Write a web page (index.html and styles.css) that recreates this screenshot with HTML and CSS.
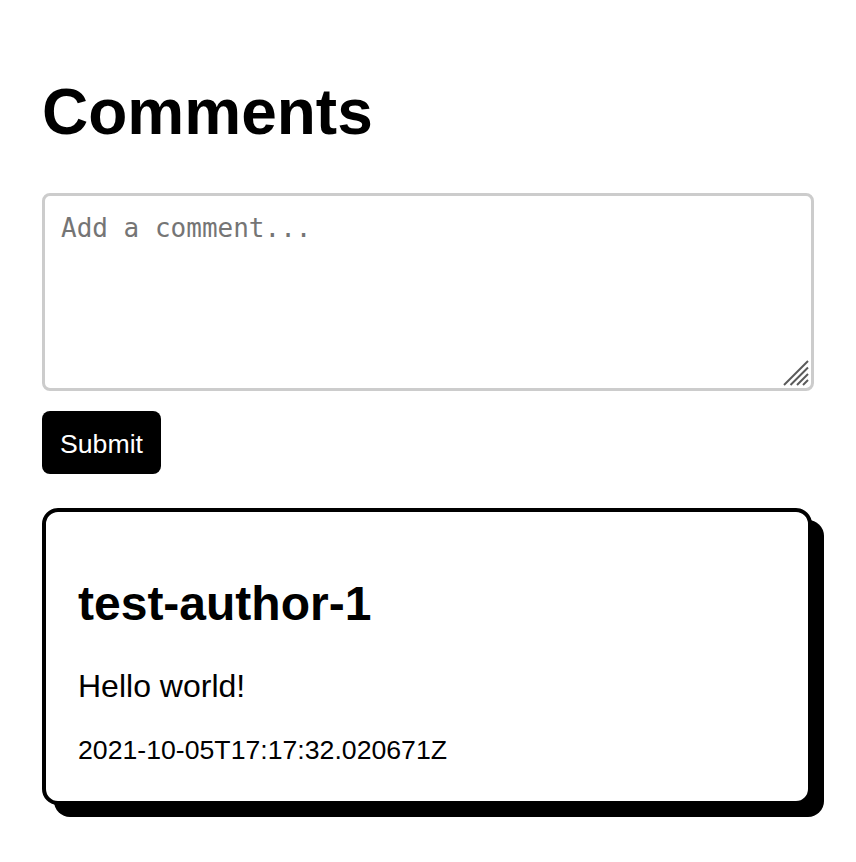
FILE: index.html
```html
<!DOCTYPE html>
<html lang="en">
<head>
<meta charset="utf-8">
<title>Comments</title>
<link rel="stylesheet" href="styles.css">
</head>
<body>
<main class="page">
  <h1 class="title">Comments</h1>
  <form class="comment-form">
    <div class="composer">
      <textarea class="composer-input" placeholder="Add a comment..."></textarea>
      <svg class="resize-grip" width="26" height="26" viewBox="0 0 26 26" aria-hidden="true">
        <g stroke="#5a5a5a" stroke-width="2" stroke-linecap="butt">
          <line x1="1" y1="25" x2="25" y2="1"/>
          <line x1="7.5" y1="25" x2="25" y2="7.5"/>
          <line x1="14" y1="25" x2="25" y2="14"/>
          <line x1="20" y1="25" x2="25" y2="20"/>
        </g>
      </svg>
    </div>
    <button type="button" class="submit-btn">Submit</button>
  </form>
  <article class="comment-card">
    <h2 class="comment-author">test-author-1</h2>
    <p class="comment-body">Hello world!</p>
    <p class="comment-date">2021-10-05T17:17:32.020671Z</p>
  </article>
</main>
</body>
</html>
```
FILE: styles.css
```css
html, body {
  margin: 0;
  padding: 0;
  background: #ffffff;
}

body {
  font-family: "Liberation Sans", Arial, Helvetica, sans-serif;
  color: #000000;
}

.page {
  padding: 75px 42px 40px;
}

.title {
  margin: 0 0 44px;
  font-size: 64px;
  font-weight: 700;
  line-height: normal;
}

.comment-form {
  margin: 0 0 34px;
}

.composer {
  position: relative;
  width: 772px;
  margin-bottom: 20px;
}

.composer-input {
  display: block;
  box-sizing: border-box;
  width: 772px;
  height: 198px;
  margin: 0;
  padding: 17px 16px 16px;
  border: 3px solid #cccccc;
  border-radius: 8px;
  resize: none;
  outline: none;
  font-family: "DejaVu Sans Mono", monospace;
  font-size: 26px;
  line-height: normal;
  color: #000000;
  background: #ffffff;
}

.composer-input::placeholder {
  color: #757575;
  opacity: 1;
}

.resize-grip {
  position: absolute;
  right: 5px;
  bottom: 5px;
  pointer-events: none;
}

.submit-btn {
  display: block;
  margin: 0;
  padding: 18px 18px 14px;
  border: none;
  border-radius: 8px;
  background: #000000;
  color: #ffffff;
  font-family: "Liberation Sans", Arial, Helvetica, sans-serif;
  font-size: 26.67px;
  line-height: 31px;
  cursor: pointer;
}

.comment-card {
  box-sizing: border-box;
  width: 770px;
  padding: 64px 32px 35px;
  border: 4px solid #000000;
  border-radius: 16px;
  box-shadow: 12px 12px 0 0 #000000;
  background: #ffffff;
}

.comment-author {
  margin: 0 0 37px;
  font-size: 48px;
  font-weight: 700;
  line-height: normal;
}

.comment-body {
  margin: 0 0 30px;
  font-size: 32px;
  line-height: normal;
}

.comment-date {
  margin: 0;
  font-size: 26.67px;
  line-height: normal;
}
```
